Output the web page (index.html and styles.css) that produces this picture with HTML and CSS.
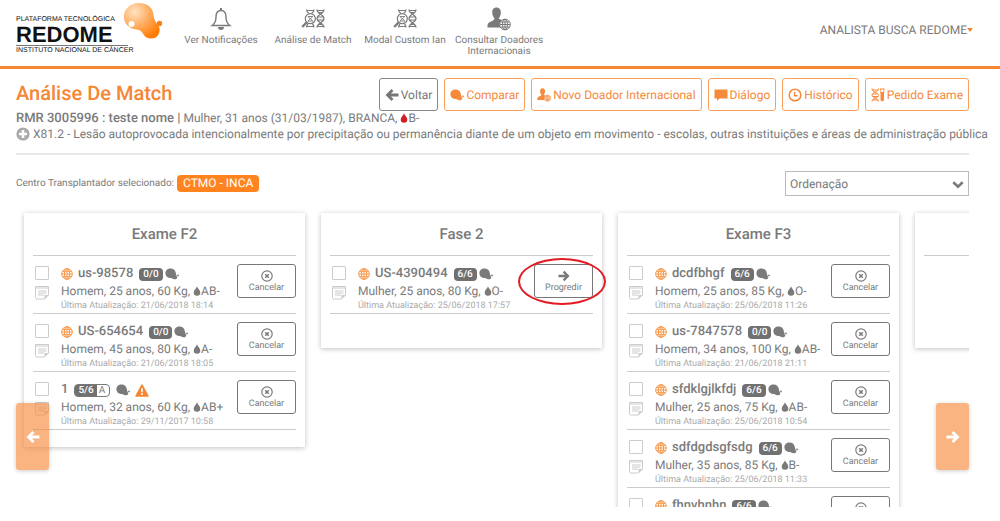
FILE: index.html
```html
<!DOCTYPE html>
<html lang="pt-BR">
<head>
<meta charset="utf-8">
<title>Redome - Análise De Match</title>
<link rel="stylesheet" href="styles.css">
</head>
<body>
<svg class="sprite" aria-hidden="true">
  <defs>
    <radialGradient id="blob" cx="0.3" cy="0.25" r="0.85">
      <stop offset="0" stop-color="#ffe3c4"/><stop offset="0.45" stop-color="#ffb066"/><stop offset="1" stop-color="#ff7a00"/>
    </radialGradient>
  </defs>
  <symbol id="bell" viewBox="0 0 22 24"><path d="M11 3.500C7 3.500 6 7 6 10c0 4-1 6.500-3.800 8.500h17.600C17 16.500 16 14 16 10c0-3-1-6.500-5-6.500z" fill="none" stroke="currentColor" stroke-width="1.400"/><path d="M11 1v3" stroke="currentColor" stroke-width="2"/><path d="M8 20h6a3 3 0 0 1-6 0z" fill="currentColor"/></symbol>
  <symbol id="dna" viewBox="0 0 24 19"><g fill="none" stroke="currentColor" stroke-width="1.200"><path d="M5.500.5c0 2 1 3 2.500 4M13 .5c0 2-1 3-2.500 4M7 15c-1 1-1.500 2-1.500 3.500M11.500 15c1 1 1.500 2 1.500 3.500M5.500 1.500h7.500M5.500 17.500h7.500"/><circle cx="9.300" cy="9.700" r="5" fill="#fff"/><path d="M7 7c0 2.500 4.600 3 4.600 5.500M11.600 7c0 2.500-4.600 3-4.600 5.500M7 7.500h4.600M7 12h4.600" stroke-width=".9"/><path d="M5.500 13.500L1.200 18" stroke-width="2.400"/><path d="M16 .5c0 5 7 4.500 7 9s-7 4-7 9M23 .5c0 5-7 4.500-7 9s7 4 7 9M16 1.500h7M17 3.500h5M16.500 8h6M16.500 11h6M17 15.500h5M16 17.500h7"/></g></symbol>
  <symbol id="globe" viewBox="0 0 12 12"><g fill="none" stroke="currentColor" stroke-width="1"><circle cx="6" cy="6" r="5.300"/><ellipse cx="6" cy="6" rx="2.600" ry="5.300"/><path d="M6 .7v10.600M.7 6h10.600M1.500 3.300h9M1.500 8.700h9"/></g></symbol>
  <symbol id="person" viewBox="0 0 24 24"><path d="M9.500.5C6.500.5 5 2.800 5.300 6c.1 2.500 1 4 2.200 5.300-.2 1.700-.7 2-3 2.900C1.200 15.500.5 16 .5 20.500h13c-1.500-3-.5-6 2.500-7-2.500-1-4-1.200-4.300-2.200C13 10 13.700 8.500 13.800 6 14 2.800 12.500.5 9.500.5z" fill="currentColor"/><g fill="#fff" stroke="currentColor"><circle cx="18" cy="17.500" r="5.300"/><ellipse cx="18" cy="17.500" rx="2.500" ry="5.300" fill="none"/><path d="M18 12.200v10.600M12.700 17.500h10.600M13.500 15h9M13.500 20h9" fill="none"/></g></symbol>
  <symbol id="match" viewBox="0 0 14 12"><path d="M5.500.5c3 0 5 1.800 5.300 4.500.1 1.500.9 2 .8 3.300 1 .7.900 1.700 0 2.400-.9.700-2 .8-3.200.3-1-.5-1.800-.9-3.500-1C2.200 9.800.4 8 .4 5.300.4 2.500 2.600.5 5.500.5z" fill="currentColor"/><circle cx="13" cy="7.400" r=".9" fill="currentColor"/></symbol>
  <symbol id="drop" viewBox="0 0 8 10"><path d="M4 .3C3.600 2.500.7 4 .7 6.500a3.300 3.200 0 0 0 6.600 0C7.300 4 4.400 2.500 4 .3z" fill="currentColor"/></symbol>
  <symbol id="left" viewBox="0 0 14 14"><path d="M7.500 2L2.500 7l5 5M3 7h10.500" fill="none" stroke="currentColor" stroke-width="2.800"/></symbol>
  <symbol id="right" viewBox="0 0 14 14"><path d="M6.500 2l5 5-5 5M11 7H.5" fill="none" stroke="currentColor" stroke-width="2.800"/></symbol>
  <symbol id="speech" viewBox="0 0 14 12"><path d="M.5.500h13v9H5.700L3 11.800V9.500H.5z" fill="currentColor"/></symbol>
  <symbol id="clock" viewBox="0 0 14 14"><circle cx="7" cy="7" r="5.800" fill="none" stroke="currentColor" stroke-width="1.500"/><path d="M6.700 3.800v4h3" fill="none" stroke="currentColor" stroke-width="1.400"/></symbol>
  <symbol id="exam" viewBox="0 0 14 14"><g fill="none" stroke="currentColor" stroke-width="1"><path d="M1 .5c0 4 6.500 4 6.500 7S1 10 1 13.500M7.500.5C7.500 4.500 1 4 1 7s6.500 3 6.500 6.500M1 2h6.500M1.500 6h5.500M1.500 8.500h5.500M1 12h6.500M9 1h4.500"/></g><path d="M9.500 4h3.500v7.500a1.700 1.800 0 0 1-3.500 0z" fill="currentColor"/><path d="M9.700 1v4M12.800 1v4" stroke="currentColor" stroke-width=".8"/></symbol>
  <symbol id="plus" viewBox="0 0 14 14"><circle cx="7" cy="7" r="6.600" fill="currentColor"/><path d="M7 3v8M3 7h8" stroke="#fff" stroke-width="2.600"/></symbol>
  <symbol id="cancel" viewBox="0 0 12 12"><circle cx="6" cy="6" r="5.200" fill="none" stroke="currentColor" stroke-width="1.200"/><path d="M4.200 4.200l3.600 3.600M7.800 4.200L4.200 7.800" stroke="currentColor" stroke-width="1.500"/></symbol>
  <symbol id="note" viewBox="0 0 14 14"><path d="M.5.500h13V9L9.500 13H2Q.5 13 .5 11.500z" fill="none" stroke="currentColor"/><path d="M.5 2h13M3 5h8.500M3 7h8.500M3 9h6" stroke="currentColor" stroke-width="1"/><path d="M13.500 9H9.500v4z" fill="currentColor"/></symbol>
  <symbol id="warn" viewBox="0 0 14 13"><path d="M7 1l6 11H1z" fill="currentColor" stroke="currentColor" stroke-width="1.500" stroke-linejoin="round"/><path d="M7 4.200v4M7 9.300v1.700" stroke="#fff" stroke-width="1.600"/></symbol>
  <symbol id="chevron" viewBox="0 0 12 8"><path d="M1.300 1.300L6 5.800l4.700-4.500" fill="none" stroke="currentColor" stroke-width="2.600"/></symbol>
</svg>

<header class="topbar">
  <a class="logo" href="#">
    <span class="logo-text">
      <span class="logo-small">PLATAFORMA TECNOLÓGICA</span>
      <strong class="logo-name">REDOME</strong>
      <span class="logo-foot">INSTITUTO NACIONAL DE CÂNCER</span>
    </span>
    <svg class="logo-blob" viewBox="0 0 40 36" aria-hidden="true"><path d="M1 15C0 7 7 0 16 0c9 0 14 5 14.500 12 .3 4 2 7 4.500 10 3 4 1.500 10-2.500 12.500-4 2.200-10 1-12-3-1.500-3-3.500-4.500-7-5C6 25.500 1.500 21 1 15z" fill="url(#blob)"/><circle cx="8.500" cy="21" r="3" fill="#fff"/><circle cx="36.500" cy="20.500" r="2.700" fill="#f58220"/></svg>
  </a>
  <nav class="menu">
    <a class="menu-item" href="#"><svg class="i-bell"><use href="#bell"/></svg><span>Ver Notificações</span></a>
    <a class="menu-item" href="#"><svg class="i-dna"><use href="#dna"/></svg><span>Análise de Match</span></a>
    <a class="menu-item" href="#"><svg class="i-dna"><use href="#dna"/></svg><span>Modal Custom Ian</span></a>
    <a class="menu-item" href="#"><svg class="i-person"><use href="#person"/></svg><span>Consultar Doadores<br>Internacionais</span></a>
  </nav>
  <button class="user" type="button">ANALISTA BUSCA REDOME<span class="caret"></span></button>
</header>

<main class="page">
  <div class="title-row">
    <h1>Análise De Match</h1>
    <div class="actions">
      <button class="btn btn-grey" type="button"><svg class="i14"><use href="#left"/></svg>Voltar</button>
      <button class="btn" type="button"><svg class="i-match"><use href="#match"/></svg>Comparar</button>
      <button class="btn" type="button"><svg class="i14"><use href="#person"/></svg>Novo Doador Internacional</button>
      <button class="btn" type="button"><svg class="i14"><use href="#speech"/></svg>Diálogo</button>
      <button class="btn" type="button"><svg class="i14"><use href="#clock"/></svg>Histórico</button>
      <button class="btn" type="button"><svg class="i14"><use href="#exam"/></svg>Pedido Exame</button>
    </div>
  </div>
  <p class="patient"><strong>RMR 3005996 : teste nome |</strong> Mulher, 31 anos (31/03/1987), BRANCA, <svg class="i-drop red"><use href="#drop"/></svg>B-</p>
  <p class="diagnosis"><svg class="i14"><use href="#plus"/></svg>X81.2 - Lesão autoprovocada intencionalmente por precipitação ou permanência diante de um objeto em movimento - escolas, outras instituições e áreas de administração pública</p>

  <div class="filter">
    <span class="center">Centro Transplantador selecionado: <span class="tag">CTMO - INCA</span></span>
    <span class="sort"><select aria-label="Ordenação"><option>Ordenação</option></select><svg class="i-chevron"><use href="#chevron"/></svg></span>
  </div>

  <div class="board">
    <div class="track">
      <section class="card">
        <h2>Exame F2</h2>
        <article class="donor">
          <div class="marks"><input type="checkbox" aria-label="us-98578"><svg class="i-note"><use href="#note"/></svg></div>
          <div class="info"><h3><svg class="i-globe"><use href="#globe"/></svg>us-98578<span class="score">0/0</span><svg class="i-match"><use href="#match"/></svg></h3><p>Homem, 25 anos, 60 Kg, <svg class="i-drop"><use href="#drop"/></svg>AB-</p><small>Última Atualização: 21/06/2018 18:14</small></div>
          <button class="act" type="button"><svg class="i12"><use href="#cancel"/></svg>Cancelar</button>
        </article>
        <article class="donor">
          <div class="marks"><input type="checkbox" aria-label="US-654654"><svg class="i-note"><use href="#note"/></svg></div>
          <div class="info"><h3><svg class="i-globe"><use href="#globe"/></svg>US-654654<span class="score">0/0</span><svg class="i-match"><use href="#match"/></svg></h3><p>Homem, 45 anos, 80 Kg, <svg class="i-drop"><use href="#drop"/></svg>A-</p><small>Última Atualização: 21/06/2018 18:05</small></div>
          <button class="act" type="button"><svg class="i12"><use href="#cancel"/></svg>Cancelar</button>
        </article>
        <article class="donor">
          <div class="marks"><input type="checkbox" aria-label="1"><svg class="i-note"><use href="#note"/></svg></div>
          <div class="info"><h3>1<span class="score-pair"><span class="score">5/6</span><span class="grade">A</span></span><svg class="i-match"><use href="#match"/></svg><svg class="i-warn"><use href="#warn"/></svg></h3><p>Homem, 32 anos, 60 Kg, <svg class="i-drop"><use href="#drop"/></svg>AB+</p><small>Última Atualização: 29/11/2017 10:58</small></div>
          <button class="act" type="button"><svg class="i12"><use href="#cancel"/></svg>Cancelar</button>
        </article>
      </section>

      <section class="card">
        <h2>Fase 2</h2>
        <article class="donor">
          <div class="marks"><input type="checkbox" aria-label="US-4390494"><svg class="i-note"><use href="#note"/></svg></div>
          <div class="info"><h3><svg class="i-globe"><use href="#globe"/></svg>US-4390494<span class="score">6/6</span><svg class="i-match"><use href="#match"/></svg></h3><p>Mulher, 25 anos, 80 Kg, <svg class="i-drop"><use href="#drop"/></svg>O-</p><small>Última Atualização: 25/06/2018 17:57</small></div>
          <button class="act highlighted" type="button"><svg class="i12"><use href="#right"/></svg>Progredir</button>
        </article>
      </section>

      <section class="card">
        <h2>Exame F3</h2>
        <article class="donor">
          <div class="marks"><input type="checkbox" aria-label="dcdfbhgf"><svg class="i-note"><use href="#note"/></svg></div>
          <div class="info"><h3><svg class="i-globe"><use href="#globe"/></svg>dcdfbhgf<span class="score">6/6</span><svg class="i-match"><use href="#match"/></svg></h3><p>Homem, 25 anos, 85 Kg, <svg class="i-drop"><use href="#drop"/></svg>O-</p><small>Última Atualização: 25/06/2018 11:26</small></div>
          <button class="act" type="button"><svg class="i12"><use href="#cancel"/></svg>Cancelar</button>
        </article>
        <article class="donor">
          <div class="marks"><input type="checkbox" aria-label="us-7847578"><svg class="i-note"><use href="#note"/></svg></div>
          <div class="info"><h3><svg class="i-globe"><use href="#globe"/></svg>us-7847578<span class="score">0/0</span><svg class="i-match"><use href="#match"/></svg></h3><p>Homem, 34 anos, 100 Kg, <svg class="i-drop"><use href="#drop"/></svg>AB-</p><small>Última Atualização: 21/06/2018 21:11</small></div>
          <button class="act" type="button"><svg class="i12"><use href="#cancel"/></svg>Cancelar</button>
        </article>
        <article class="donor">
          <div class="marks"><input type="checkbox" aria-label="sfdklgjlkfdj"><svg class="i-note"><use href="#note"/></svg></div>
          <div class="info"><h3><svg class="i-globe"><use href="#globe"/></svg>sfdklgjlkfdj<span class="score">6/6</span><svg class="i-match"><use href="#match"/></svg></h3><p>Mulher, 25 anos, 75 Kg, <svg class="i-drop"><use href="#drop"/></svg>AB-</p><small>Última Atualização: 25/06/2018 10:54</small></div>
          <button class="act" type="button"><svg class="i12"><use href="#cancel"/></svg>Cancelar</button>
        </article>
        <article class="donor">
          <div class="marks"><input type="checkbox" aria-label="sdfdgdsgfsdg"><svg class="i-note"><use href="#note"/></svg></div>
          <div class="info"><h3><svg class="i-globe"><use href="#globe"/></svg>sdfdgdsgfsdg<span class="score">6/6</span><svg class="i-match"><use href="#match"/></svg></h3><p>Mulher, 35 anos, 85 Kg, <svg class="i-drop"><use href="#drop"/></svg>B-</p><small>Última Atualização: 25/06/2018 11:33</small></div>
          <button class="act" type="button"><svg class="i12"><use href="#cancel"/></svg>Cancelar</button>
        </article>
        <article class="donor">
          <div class="marks"><input type="checkbox" aria-label="fhnvhnhn"><svg class="i-note"><use href="#note"/></svg></div>
          <div class="info"><h3><svg class="i-globe"><use href="#globe"/></svg>fhnvhnhn<span class="score">6/6</span><svg class="i-match"><use href="#match"/></svg></h3></div>
          <button class="act" type="button"><svg class="i12"><use href="#cancel"/></svg>Cancelar</button>
        </article>
      </section>

      <section class="card"><h2></h2></section>
    </div>
    <button class="pager prev" type="button" aria-label="Anterior"><svg class="i14"><use href="#left"/></svg></button>
    <button class="pager next" type="button" aria-label="Próximo"><svg class="i14"><use href="#right"/></svg></button>
  </div>
</main>
</body>
</html>
```

FILE: styles.css
```css
* { box-sizing: border-box; }

body {
  margin: 0;
  height: 100vh;
  display: flex;
  flex-direction: column;
  overflow: hidden;
  background: #fff;
  color: #7a7a7a;
  font: 12px/16px Roboto, sans-serif;
  text-rendering: geometricPrecision;
}

h1, h2, h3, p { margin: 0; }
a { color: inherit; text-decoration: none; }
button, select { font: inherit; color: inherit; text-rendering: inherit; }
svg { flex: none; }
.sprite { position: absolute; width: 0; height: 0; }

.i12 { width: 12px; height: 12px; }
.i14 { width: 14px; height: 14px; }
.i-bell { width: 22px; height: 24px; }
.i-dna { width: 24px; height: 19px; margin: 2px 0 3px; }
.i-person { width: 24px; height: 24px; }
.i-match { width: 14px; height: 12px; }
.i-globe { width: 12px; height: 12px; color: #f79748; }
.i-drop { width: 8px; height: 10px; vertical-align: -1px; }
.i-note { width: 14px; height: 14px; color: #ccc; }
.i-warn { width: 14px; height: 13px; color: #f58634; }
.red { color: #d01f26; }

/* Top bar */
.topbar {
  display: flex;
  align-items: flex-start;
  height: 69px;
  padding: 0 27px 0 16px;
  border-bottom: 3px solid #f58634;
}
.logo { display: flex; color: #111; font-family: "Liberation Sans", Arial, sans-serif; }
.logo-text { display: flex; flex-direction: column; width: 112px; padding-top: 16px; white-space: nowrap; }
.logo-small { font-size: 7px; line-height: 8px; }
.logo-name { font-size: 22px; line-height: 21px; }
.logo-foot { border-top: 1px solid #777; font-size: 7px; line-height: 9px; }
.logo-blob { width: 40px; height: 36px; margin: 3px 0 0 -5px; }
.menu { display: flex; gap: 8px; padding: 7px 0 0 16px; line-height: 11px; font-size: 10px; text-align: center; }
.menu-item { display: flex; flex-direction: column; align-items: center; gap: 4px; min-width: 84px; }
.user { margin: 22px 0 0 auto; padding: 0; border: 0; background: none; display: flex; align-items: center; }
.caret { border: 3px solid transparent; border-top: 4px solid #f58634; border-bottom: 0; }

/* Page heading */
.page { flex: 1; min-height: 0; display: flex; flex-direction: column; padding: 9px 31px 14px 16px; }
.title-row { display: flex; justify-content: space-between; align-items: center; }
h1 { font-size: 20px; line-height: 30px; padding-bottom: 3px; font-weight: 500; color: #f58634; }
.actions { display: flex; gap: 6px; }
.btn {
  display: flex;
  align-items: center;
  gap: 2px;
  height: 33px;
  padding: 0 5px;
  border: 1px solid #f9a15c;
  border-radius: 3px;
  background: #fff;
  color: #f58a3c;
  white-space: nowrap;
}
.btn-grey { border-color: #888; color: #777; }
.patient { line-height: 14px; }
.patient strong { font-size: 13px; font-weight: 500; }
.diagnosis { display: flex; align-items: center; gap: 3px; padding-bottom: 11px; border-bottom: 2px solid #e8e8e8; white-space: nowrap; }
.diagnosis svg { color: #aaa; }

/* Filter line */
.filter { display: flex; justify-content: space-between; align-items: center; margin-top: 16px; }
.center { display: flex; align-items: center; gap: 3px; font-size: 10px; }
.tag { padding: 0 6px; border-radius: 4px; background: #ff8420; color: #fff; font-size: 12px; line-height: 17px; }
.sort { position: relative; width: 184px; }
.sort select { display: block; width: 100%; height: 25px; padding: 0 4px; border: 1px solid #bbb; border-radius: 0; background: #fff; appearance: none; }
.i-chevron { position: absolute; right: 5px; top: 10px; width: 12px; height: 8px; pointer-events: none; }

/* Board */
.board { position: relative; flex: 1; min-height: 0; margin-top: 8px; }
.track { display: flex; align-items: flex-start; gap: 16px; height: 100%; padding: 9px 8px; overflow: hidden; }
.card { flex: none; width: 281px; min-height: 135px; padding: 0 9px 17px; background: #fff; box-shadow: 0 1px 5px rgba(0, 0, 0, 0.25); }
.card h2 { height: 43px; border-bottom: 1px solid #ccc; font-size: 15px; line-height: 43px; font-weight: 500; text-align: center; }
.donor { display: flex; height: 58px; padding: 8px 0 0 2px; border-bottom: 1px solid #ccc; }
.marks { display: flex; flex-direction: column; gap: 6px; width: 26px; padding-top: 2px; }
.marks input { appearance: none; width: 14px; height: 14px; margin: 0; border: 1px solid #ccc; border-radius: 1px; background: #fff; }
.info { flex: 1; white-space: nowrap; }
.info h3 { display: flex; align-items: center; height: 20px; font-size: 13px; font-weight: 500; }
.info h3 .i-globe { margin-right: 5px; }
.info h3 .i-match { margin-left: 2px; }
.info h3 .i-warn { margin-left: 5px; }
.info p { line-height: 15px; }
.info small { display: block; font-size: 9px; line-height: 14px; color: #aaa; }
.score { margin-left: 6px; padding: 0 4px; border-radius: 4px; background: #707070; color: #fff; font-size: 10px; line-height: 13px; }
.score-pair { display: flex; margin: 0 4px 0 6px; border: 1px solid #777; border-radius: 4px; font-size: 10px; line-height: 11px; }
.score-pair .score { margin: 0; padding: 0 3px; border-radius: 2px 0 0 2px; line-height: 11px; }
.grade { padding: 0 4px 0 2px; font-weight: 400; }
.act {
  position: relative;
  display: flex;
  flex-direction: column;
  align-items: center;
  justify-content: center;
  gap: 1px;
  width: 59px;
  height: 34px;
  padding: 2px 0 0;
  border: 1px solid #777;
  border-radius: 3px;
  background: #fff;
  font-size: 9px;
  line-height: 11px;
}
.highlighted::after {
  content: "";
  position: absolute;
  inset: -7px -14px -8px -17px;
  border: 2px solid #e31b23;
  border-radius: 50%;
}

.pager {
  position: absolute;
  bottom: 37px;
  display: flex;
  align-items: center;
  justify-content: center;
  width: 33px;
  height: 67px;
  padding: 0;
  border: 0;
  border-radius: 3px;
  background: rgba(245, 134, 52, 0.62);
  color: #fff;
  box-shadow: 0 1px 4px rgba(0, 0, 0, 0.2);
}
.prev { left: 0; }
.next { right: 0; }
```
